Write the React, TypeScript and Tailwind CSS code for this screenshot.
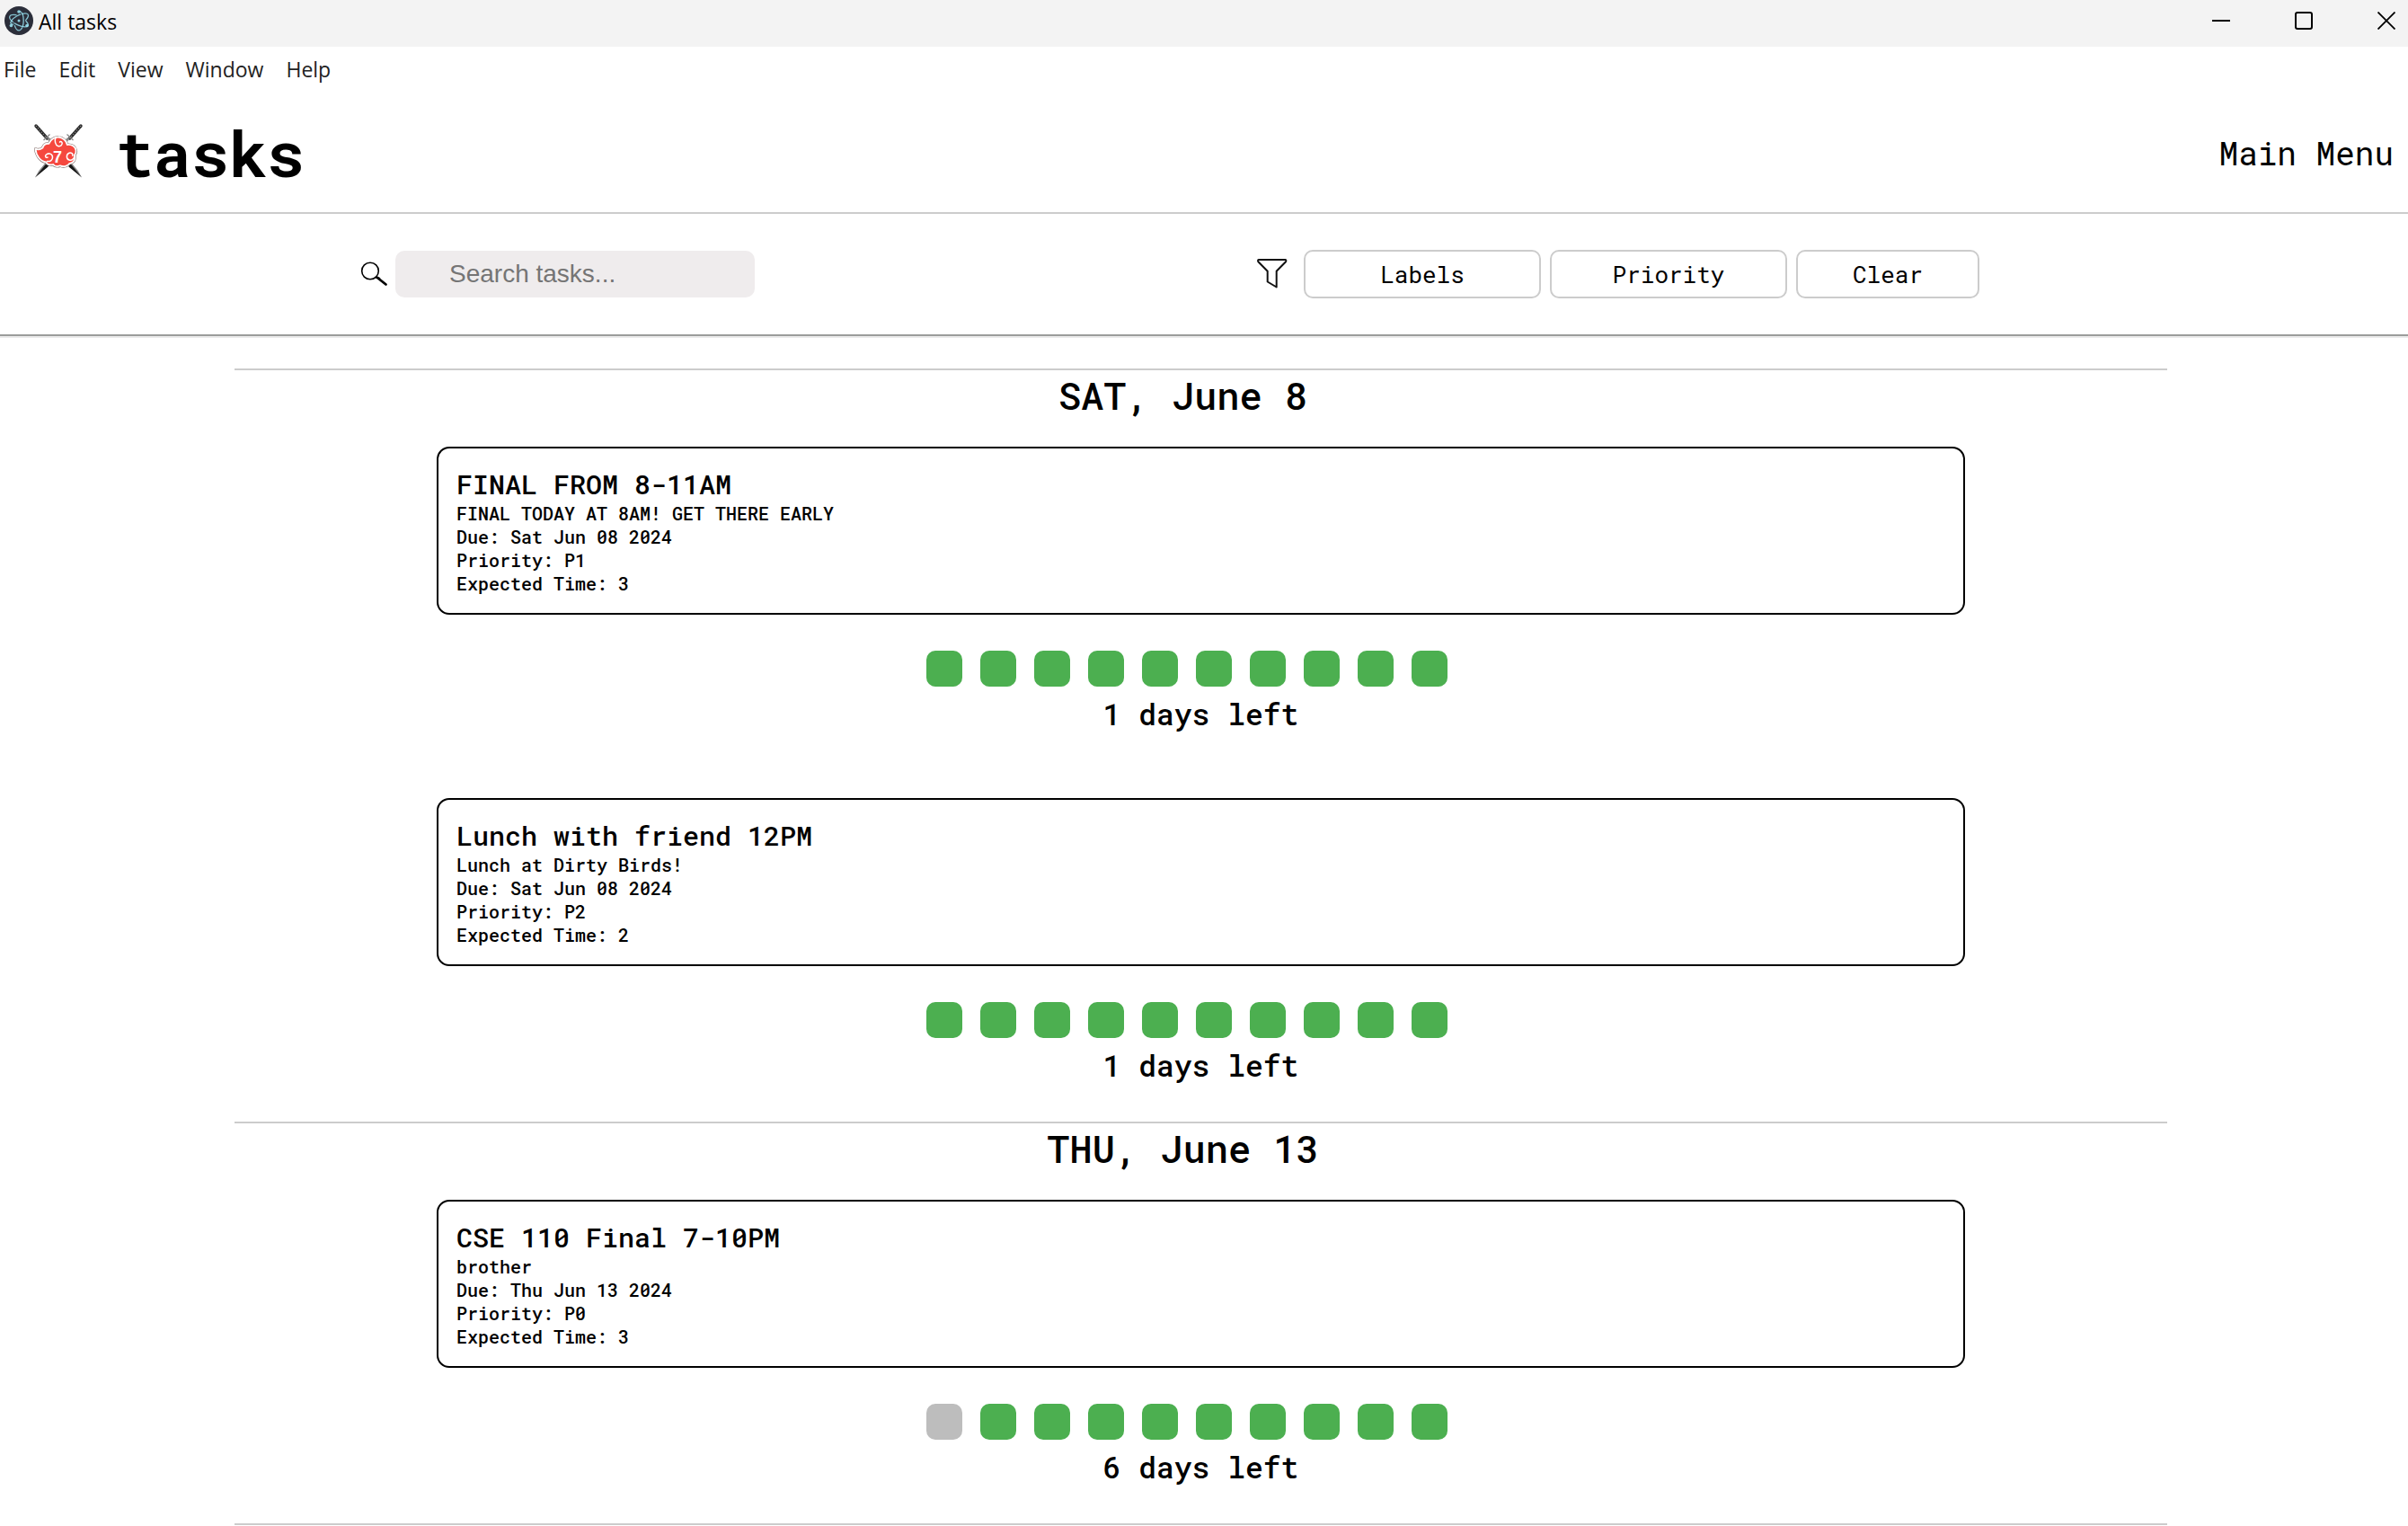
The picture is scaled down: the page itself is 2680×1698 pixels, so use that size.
import React from "react";

type Task = {
  title: string;
  description: string;
  due: string;
  priority: string;
  time: number;
  emptyBlocks: number;
  daysLeft: number;
};

type Day = { label: string; tasks: Task[] };

const days: Day[] = [
  {
    label: "SAT, June 8",
    tasks: [
      {
        title: "FINAL FROM 8-11AM",
        description: "FINAL TODAY AT 8AM! GET THERE EARLY",
        due: "Sat Jun 08 2024",
        priority: "P1",
        time: 3,
        emptyBlocks: 0,
        daysLeft: 1,
      },
      {
        title: "Lunch with friend 12PM",
        description: "Lunch at Dirty Birds!",
        due: "Sat Jun 08 2024",
        priority: "P2",
        time: 2,
        emptyBlocks: 0,
        daysLeft: 1,
      },
    ],
  },
  {
    label: "THU, June 13",
    tasks: [
      {
        title: "CSE 110 Final 7-10PM",
        description: "brother",
        due: "Thu Jun 13 2024",
        priority: "P0",
        time: 3,
        emptyBlocks: 1,
        daysLeft: 6,
      },
    ],
  },
];

const menus = ["File", "Edit", "View", "Window", "Help"];

const cloud =
  "M2.500 28.500c2.500 1.300 6 .5 8-1 .8-3 3.500-5 7-4.700 1.500-4.500 6-7.500 10.500-7.100 5 .3 9 3.800 9.800 8.300 5-.5 9 2 9.700 6 .4 2.300-.2 4-1.500 5.300 1.700 4-.5 9-5.500 9.500-2 3.200-6.500 4.200-10.500 2.500-2.500 1.200-6 1-7.800-1.300-3.200 1-6.700.2-8-2.700C8.500 43 3 36.500 2.500 28.500z";

function AppIcon() {
  return (
    <svg viewBox="0 0 32 32" className="size-8" aria-hidden="true">
      <circle cx="16" cy="16" r="16" fill="#2b2e3a" />
      <g fill="none" stroke="#9feaf9" strokeOpacity="0.8" strokeWidth="1.3" strokeLinecap="round">
        <path d="M13 9.600C9.400 9 6.600 9.600 5.900 11.100c-.8 1.500.6 4 3.500 6.400M11 18.700c1.400.9 3 1.800 4.600 2.500 4.900 2.100 9.500 2.300 10.500.5.7-1.200-.2-3.100-2.200-5.200" />
        <path d="M23.700 15.400c2.300-2.600 3.300-5 2.400-6.400-.8-1.300-3.300-1.500-6.400-.7M17.900 8.900c-1.400.5-2.900 1.200-4.400 2.100-4.600 2.700-7.400 6.500-6.400 8.200.4.700 1.400 1 2.700 1" />
        <path d="M11.400 21.600c1.100 3.300 2.800 5.300 4.600 5.300 1.400 0 2.700-1.200 3.700-3.100M20.300 22.300c.6-1.800.9-4 .9-6.300 0-5.200-1.700-9.500-4-10.500" />
      </g>
      <g fill="#9feaf9" fillOpacity="0.85">
        <circle cx="16" cy="16" r="1.500" />
        <circle cx="16" cy="6" r="1.800" />
        <circle cx="7.400" cy="21.500" r="1.800" />
        <circle cx="25" cy="21.500" r="1.800" />
      </g>
    </svg>
  );
}

function Sword() {
  return (
    <g>
      <path d="M3 3l12.500 14" stroke="#2a2a2a" strokeWidth="3.400" strokeLinecap="round" />
      <path d="M3 3l12.500 14" stroke="#8a8a8a" strokeWidth="1.400" strokeDasharray="1.200 1.800" />
      <path d="M11.500 19l7-6.500" stroke="#888" strokeWidth="1.300" />
      <path d="M15.500 17l2.500-1L44 46q6 6 10 14.500L40 47z" fill="#8a8a8a" />
      <path d="M16 18l27 29 11 13.500L40 49z" fill="#161616" />
    </g>
  );
}

function Logo() {
  return (
    <svg viewBox="0 0 56 62" className="mb-1 h-[62px] w-14" aria-hidden="true">
      <Sword />
      <g transform="translate(56 0) scale(-1 1)">
        <Sword />
      </g>
      <path d={cloud} fill="#fff" stroke="#8a7673" strokeWidth="3" strokeLinejoin="round" />
      <path d={cloud} fill="#f5483f" stroke="#fff" strokeWidth="1.800" strokeLinejoin="round" />
      <g fill="none" stroke="#fff" strokeWidth="1.500" strokeLinecap="round">
        <path d="M25 16c-1.500 3.500-.5 8.500 2.500 9.500s5.500-1.500 4.500-4c-.6-1.300-2-1.300-2.500-.3" />
        <path d="M15.500 42.500c3.500.5 6-1.500 6-4.500 0-4-4.500-5.500-7.500-2.500-1.200 1.800.3 3.400 2 2.600" />
        <path d="M46 36c0 3.500-3 6-6 5-3.500-1.200-3.500-6.500 0-7.800 2.500-.8 4.500 1 3.800 3" />
      </g>
      <text
        x="27"
        y="44"
        textAnchor="middle"
        fill="#fff"
        className="font-['Liberation_Sans',sans-serif] text-[18px] font-bold"
      >
        7
      </text>
    </svg>
  );
}

function TaskCard({ task }: { task: Task }) {
  return (
    <article className="font-medium">
      <div className="rounded-[14px] border-2 border-black px-5 py-5 text-xl leading-[26px]">
        <h3 className="text-[30px] leading-[39px]">{task.title}</h3>
        <p>{task.description}</p>
        <p>Due: {task.due}</p>
        <p>Priority: {task.priority}</p>
        <p>Expected Time: {task.time}</p>
      </div>
      <div className="mt-10 flex justify-center gap-5 pr-[31px]">
        {Array.from({ length: 10 }, (_, i) => (
          <span
            key={i}
            className={i < task.emptyBlocks ? "size-10 rounded-[10px] bg-[#bdbdbd]" : "size-10 rounded-[10px] bg-[#4caf50]"}
          />
        ))}
      </div>
      <p className="mt-2 pb-10 text-center text-[33px] leading-[45px]">{task.daysLeft} days left</p>
    </article>
  );
}

export default function App() {
  return (
    <div className="bg-white font-['Roboto_Mono','DejaVu_Sans_Mono',monospace] text-black">
      <div className="flex h-[52px] items-center justify-between bg-[#f3f3f3] pr-3.5 pb-1.5 pl-[5px] font-['Segoe_UI','Open_Sans',sans-serif]">
        <div className="flex items-center gap-1.5">
          <AppIcon />
          <span className="pt-0.5 text-[23px] leading-7">All tasks</span>
        </div>
        <div className="flex gap-[72px]">
          <button aria-label="Minimize" className="size-5">
            <svg viewBox="0 0 20 20" className="size-5">
              <path d="M0 10h20" stroke="#000" strokeWidth="2" />
            </svg>
          </button>
          <button aria-label="Maximize" className="size-5">
            <svg viewBox="0 0 20 20" className="size-5">
              <rect x="1" y="1" width="18" height="18" rx="2" fill="none" stroke="#000" strokeWidth="2" />
            </svg>
          </button>
          <button aria-label="Close" className="size-5">
            <svg viewBox="0 0 20 20" className="size-5">
              <path d="M0.500 0.500l19 19M19.500 0.500l-19 19" stroke="#000" strokeWidth="1.800" />
            </svg>
          </button>
        </div>
      </div>

      <nav className="flex h-[52px] items-center gap-[25px] pb-0.5 pl-1 font-['Segoe_UI','Open_Sans',sans-serif] text-[23px] leading-7 text-[#222]">
        {menus.map((m) => (
          <button key={m}>{m}</button>
        ))}
      </nav>

      <header className="flex h-[134px] items-center justify-between border-b-2 border-[#ccc] pr-4 pl-[37px]">
        <div className="flex items-center gap-9">
          <Logo />
          <h1 className="text-[70px] leading-[92px] font-bold">tasks</h1>
        </div>
        <a href="#" className="text-4xl">
          Main Menu
        </a>
      </header>

      <div className="flex h-[136px] items-center justify-between border-b-2 border-[#9b9d9b] pr-[477px] pl-[400px] shadow-[0_2px_0_#ebebeb]">
        <div className="flex items-center gap-2">
          <label htmlFor="search" aria-label="Search">
            <svg viewBox="0 0 32 32" className="size-8" fill="none" stroke="#000">
              <circle cx="12" cy="12.500" r="9.300" strokeWidth="1.600" />
              <path d="M19 19.500l3 1.500M20 20l9.500 7.500" strokeWidth="2.800" strokeLinecap="round" />
            </svg>
          </label>
          <input
            id="search"
            type="text"
            placeholder="Search tasks..."
            className="h-[52px] w-[400px] rounded-[10px] bg-[#efeced] px-[60px] font-['Liberation_Sans',sans-serif] text-[28px] placeholder:text-[#757575]"
          />
        </div>
        <div className="flex items-center gap-2.5">
          <svg viewBox="0 0 34 36" className="mr-2 h-9 w-[34px]" aria-hidden="true">
            <path
              d="M1.700 2h30c.8 0 .8 1.500.3 2.200L21.700 14.800V32.500L11.700 26.500V14.800L1.400 4.200C.9 3.500.9 2 1.700 2z"
              fill="none"
              stroke="#111"
              strokeWidth="2"
              strokeLinejoin="round"
            />
          </svg>
          <button className="h-[54px] w-[264px] rounded-[10px] border-2 border-[#ccc] text-[26px]">Labels</button>
          <button className="h-[54px] w-[264px] rounded-[10px] border-2 border-[#ccc] text-[26px]">Priority</button>
          <button className="h-[54px] w-[204px] rounded-[10px] border-2 border-[#ccc] text-[26px]">Clear</button>
        </div>
      </div>

      <main className="pt-9 pr-[268px] pl-[261px]">
        {days.map((day) => (
          <section key={day.label} className="border-t-2 border-[#ccc]">
            <h2 className="pr-10 pb-[29px] text-center text-[42px] leading-[56px] font-medium">{day.label}</h2>
            <div className="flex flex-col gap-[31px] px-[225px]">
              {day.tasks.map((task) => (
                <TaskCard key={task.title} task={task} />
              ))}
            </div>
          </section>
        ))}
        <hr className="border-t-2 border-[#ccc]" />
      </main>
    </div>
  );
}
